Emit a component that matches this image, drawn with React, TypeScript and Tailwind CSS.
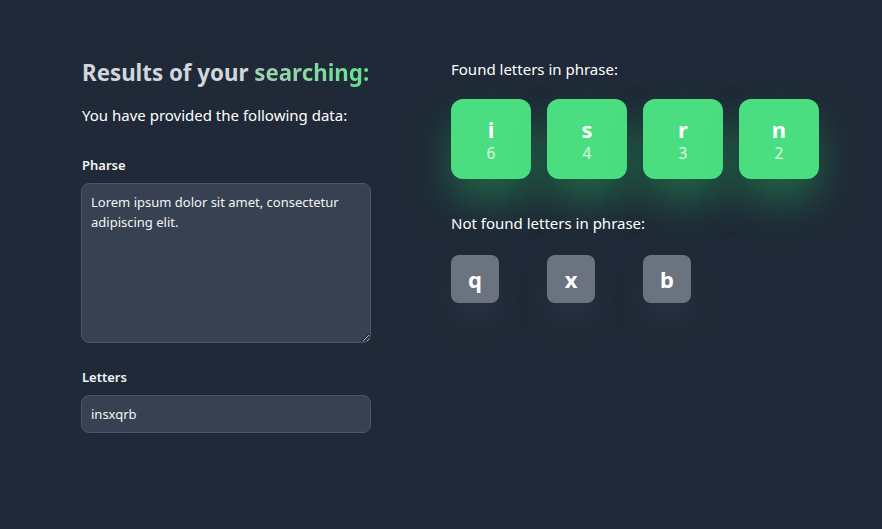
const found = [
  { letter: 'i', count: 6 },
  { letter: 's', count: 4 },
  { letter: 'r', count: 3 },
  { letter: 'n', count: 2 },
]

const notFound = ['q', 'x', 'b']

export default function App() {
  return (
    <div className="min-h-[529px] w-full bg-[#1f2937] text-white font-['Segoe_UI','Noto_Sans',sans-serif]">
      <div className="flex gap-[80px] pl-[81px] pt-[57px]">
        <div className="w-[290px] flex flex-col">
          <h1 className="pl-px text-[22.3px] leading-[32px] font-bold text-gray-300">
            Results of your{' '}
            <span className="bg-gradient-to-r from-[#a3cfb1] to-[#5fe08f] bg-clip-text text-transparent">searching:</span>
          </h1>
          <p className="mt-[14px] pl-px text-[15px] leading-6">You have provided the following data:</p>

          <label className="mt-[28px] pl-px text-[13px] leading-5 font-semibold text-gray-100">Pharse</label>
          <textarea
            className="mt-[8px] h-[160px] w-full resize-y rounded-lg border border-gray-600 bg-[#374151] px-[9px] py-[8px] text-[13px] leading-[20px] text-gray-100 outline-none"
            defaultValue="Lorem ipsum dolor sit amet, consectetur adipiscing elit."
          />

          <label className="mt-[24px] pl-px text-[13px] leading-5 font-semibold text-gray-100">Letters</label>
          <input
            className="mt-[8px] h-[38px] w-full rounded-lg border border-gray-600 bg-[#374151] px-[9px] text-[13px] text-gray-100 outline-none"
            defaultValue="insxqrb"
          />
        </div>

        <div className="flex flex-col">
          <p className="text-[15px] leading-6">Found letters in phrase:</p>
          <div className="mt-[18px] grid grid-cols-4 gap-4 w-max">
            {found.map((f) => (
              <div
                key={f.letter}
                className="flex h-20 w-20 flex-col items-center justify-center rounded-xl bg-[#4ade80] shadow-[0_22px_40px_-2px_rgba(34,197,94,0.4)]"
              >
                <span className="text-[22px] leading-7 font-bold">{f.letter}</span>
                <span className="text-[15.5px] leading-5 text-white/80">{f.count}</span>
              </div>
            ))}
          </div>

          <p className="mt-[32px] text-[15px] leading-6">Not found letters in phrase:</p>
          <div className="mt-[20px] grid grid-cols-4 gap-4 w-max">
            {notFound.map((l) => (
              <div key={l} className="w-20">
                <div className="flex h-12 w-12 items-center justify-center rounded-lg bg-[#6b7280] text-[22px] font-bold shadow-[0_18px_30px_-4px_rgba(55,65,81,0.45)]">
                  {l}
                </div>
              </div>
            ))}
          </div>
        </div>
      </div>
    </div>
  )
}
